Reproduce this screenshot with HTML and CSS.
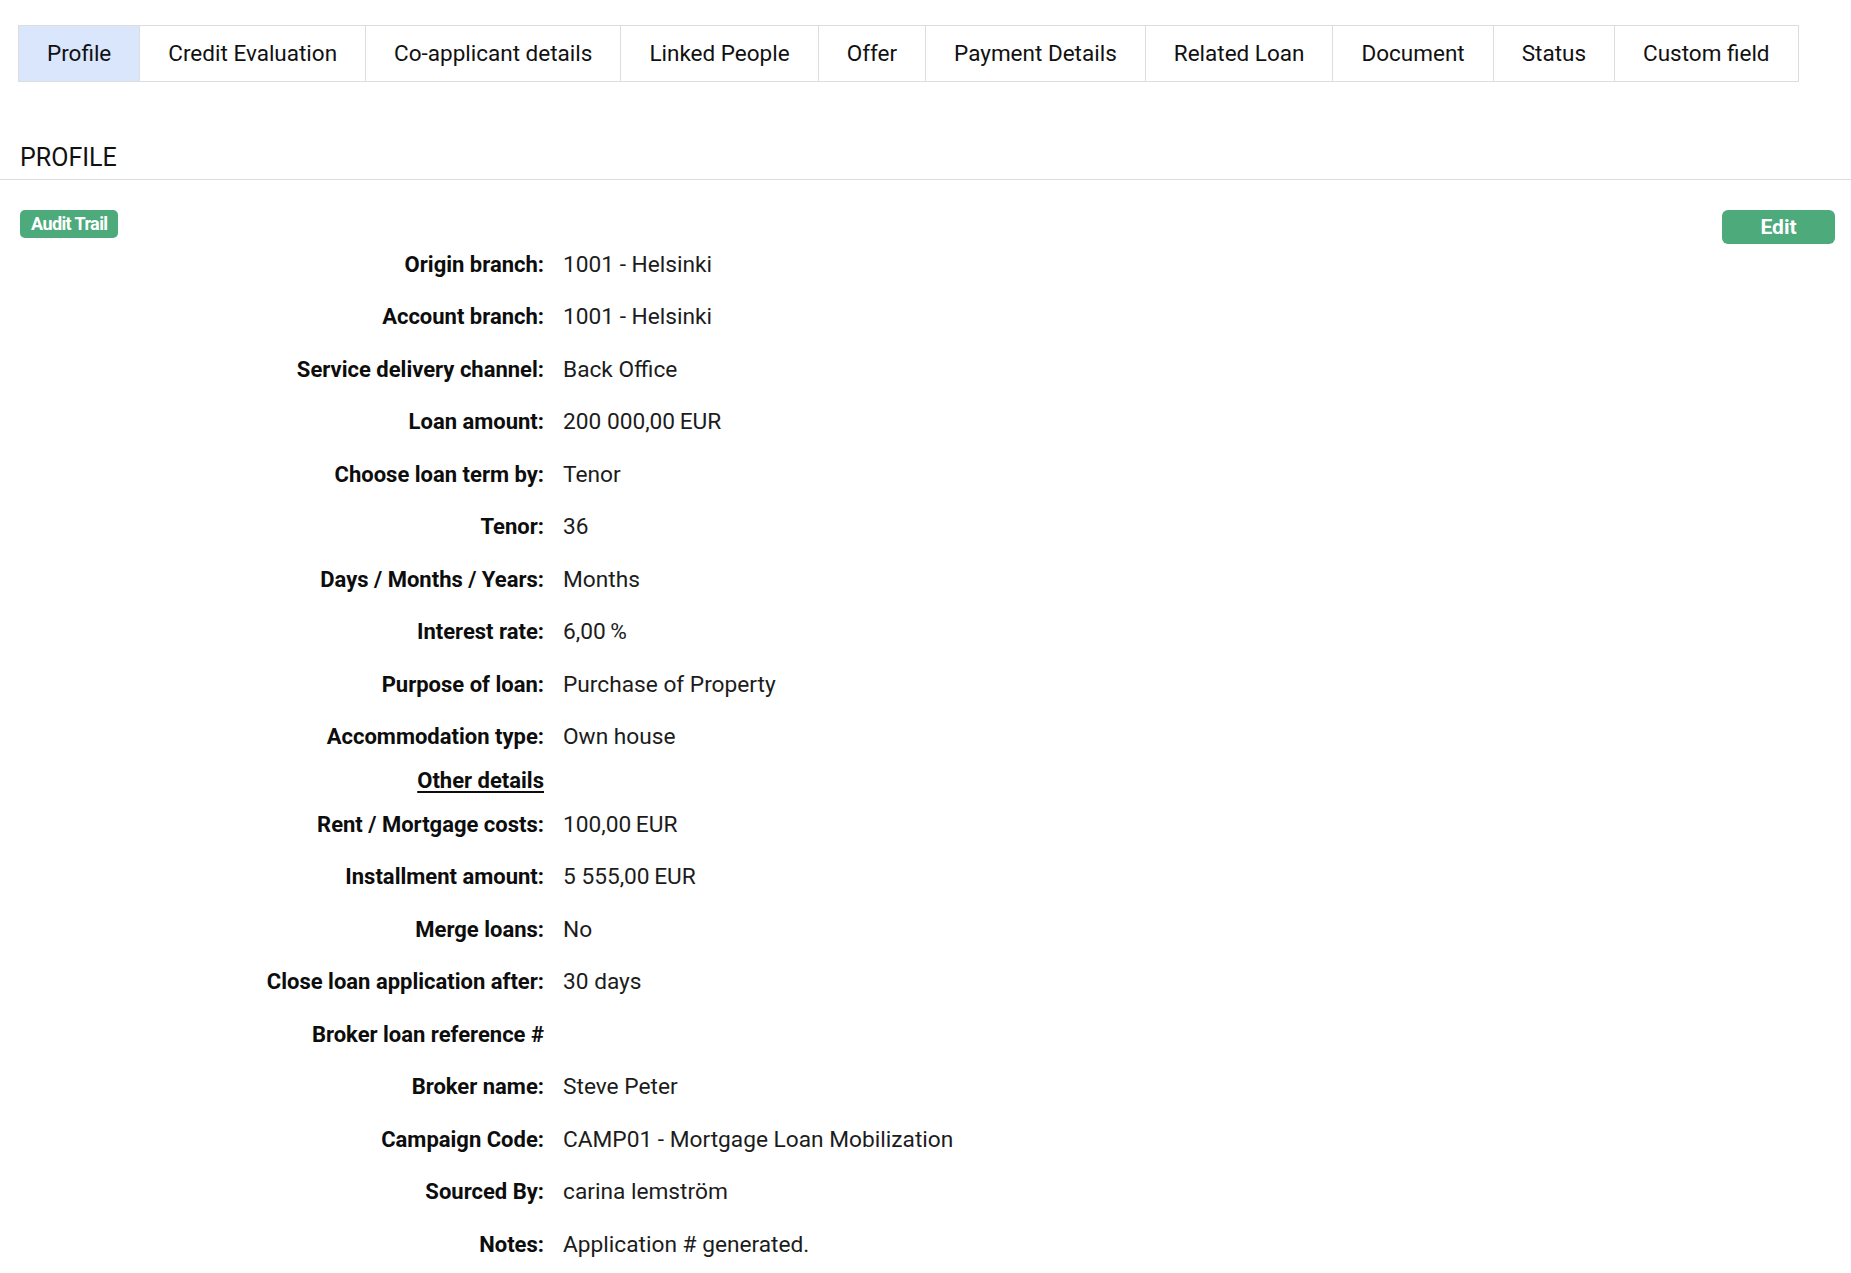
FILE: index.html
```html
<!DOCTYPE html>
<html lang="en">
<head>
<meta charset="utf-8">
<title>Profile</title>
<link rel="stylesheet" href="styles.css">
</head>
<body>
<nav class="tabs">
  <div class="tab active">Profile</div>
  <div class="tab">Credit Evaluation</div>
  <div class="tab">Co-applicant details</div>
  <div class="tab">Linked People</div>
  <div class="tab">Offer</div>
  <div class="tab">Payment Details</div>
  <div class="tab">Related Loan</div>
  <div class="tab">Document</div>
  <div class="tab">Status</div>
  <div class="tab">Custom field</div>
</nav>

<h2 class="section-title">PROFILE</h2>

<section class="panel">
  <div class="toolbar">
    <span class="badge">Audit Trail</span>
    <button class="btn-edit">Edit</button>
  </div>
  <dl class="details">
    <div class="row"><dt>Origin branch:</dt><dd>1001 - Helsinki</dd></div>
    <div class="row"><dt>Account branch:</dt><dd>1001 - Helsinki</dd></div>
    <div class="row"><dt>Service delivery channel:</dt><dd>Back Office</dd></div>
    <div class="row"><dt>Loan amount:</dt><dd>200 000,00&#8201;EUR</dd></div>
    <div class="row"><dt>Choose loan term by:</dt><dd>Tenor</dd></div>
    <div class="row"><dt>Tenor:</dt><dd>36</dd></div>
    <div class="row"><dt>Days / Months / Years:</dt><dd>Months</dd></div>
    <div class="row"><dt>Interest rate:</dt><dd>6,00&#8201;%</dd></div>
    <div class="row"><dt>Purpose of loan:</dt><dd>Purchase of Property</dd></div>
    <div class="row"><dt>Accommodation type:</dt><dd>Own house</dd></div>
    <div class="row sub"><dt><a class="sub-link">Other details</a></dt><dd></dd></div>
    <div class="row"><dt>Rent / Mortgage costs:</dt><dd>100,00&#8201;EUR</dd></div>
    <div class="row"><dt>Installment amount:</dt><dd>5 555,00&#8201;EUR</dd></div>
    <div class="row"><dt>Merge loans:</dt><dd>No</dd></div>
    <div class="row"><dt>Close loan application after:</dt><dd>30 days</dd></div>
    <div class="row"><dt>Broker loan reference #</dt><dd></dd></div>
    <div class="row"><dt>Broker name:</dt><dd>Steve Peter</dd></div>
    <div class="row"><dt>Campaign Code:</dt><dd>CAMP01 - Mortgage Loan Mobilization</dd></div>
    <div class="row"><dt>Sourced By:</dt><dd>carina lemström</dd></div>
    <div class="row"><dt>Notes:</dt><dd>Application # generated.</dd></div>
  </dl>
</section>
</body>
</html>
```
FILE: styles.css
```css
html, body {
  margin: 0;
  padding: 0;
  background: #ffffff;
}

body {
  font-family: Roboto, "Liberation Sans", sans-serif;
  color: #111111;
  font-size: 22px;
}

.tabs {
  display: inline-flex;
  margin: 25px 0 0 18px;
  border: 1px solid #dddddd;
}

.tab {
  padding: 14px 28px;
  font-size: 22.5px;
  line-height: 27px;
  color: #111111;
  border-left: 1px solid #dddddd;
  white-space: nowrap;
}

.tab:first-child {
  border-left: none;
}

.tab.active {
  background: #d9e6fc;
}

.section-title {
  margin: 61px 0 0;
  padding: 0 20px 6px;
  font-size: 25px;
  line-height: 30px;
  font-weight: 400;
  color: #111111;
  border-bottom: 1px solid #dddddd;
}

.panel {
  padding: 30px 16px 0 20px;
}

.toolbar {
  display: flex;
  justify-content: space-between;
  align-items: flex-start;
  height: 28px;
}

.badge {
  display: inline-block;
  background: #4caa7b;
  color: #ffffff;
  font-weight: 700;
  font-size: 18px;
  line-height: 28px;
  height: 28px;
  padding: 0 11px;
  border-radius: 5px;
  letter-spacing: -0.6px;
}

.btn-edit {
  width: 113px;
  height: 34px;
  border: none;
  border-radius: 6px;
  background: #4caa7b;
  color: #ffffff;
  font-family: Roboto, "Liberation Sans", sans-serif;
  font-size: 21px;
  font-weight: 700;
  padding: 0;
}

.details {
  margin: 0;
}

.row {
  display: grid;
  grid-template-columns: 524px 1fr;
  column-gap: 19px;
  align-items: center;
  height: 52.5px;
}

.row.sub {
  height: 35px;
}

dt {
  margin: 0;
  text-align: right;
  font-weight: 700;
  line-height: 27px;
  color: #0d0d0d;
  white-space: nowrap;
}

dd {
  margin: 0;
  font-size: 22.7px;
  line-height: 27px;
  color: #1c1c1c;
  white-space: nowrap;
}

.sub-link {
  color: #0d0d0d;
  text-decoration: underline;
  text-underline-offset: 3px;
  text-decoration-thickness: 1.5px;
}
```
